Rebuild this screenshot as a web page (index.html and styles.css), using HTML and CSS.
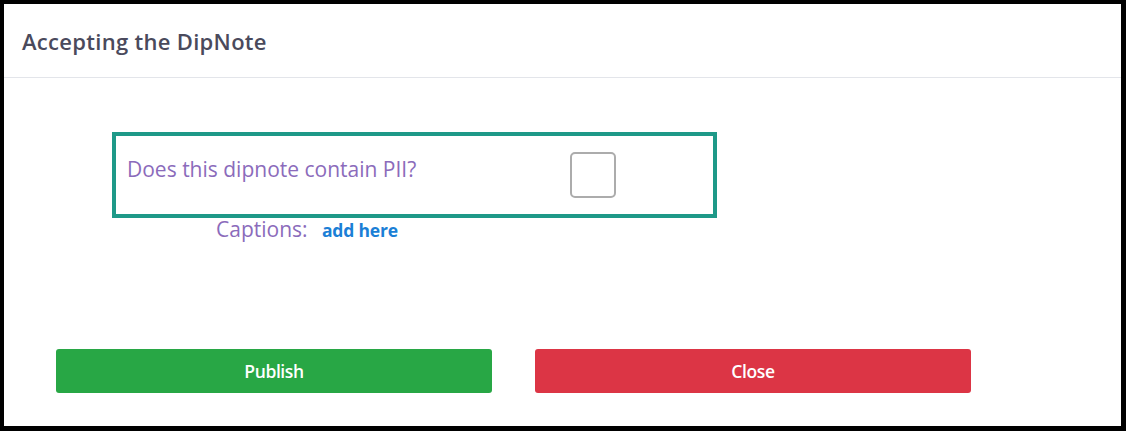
FILE: index.html
```html
<!DOCTYPE html>
<html>
<head>
<meta charset="utf-8">
<link rel="stylesheet" href="styles.css">
</head>
<body>
<div class="frame">
  <div class="modal-header">
    <h2 class="modal-title">Accepting the DipNote</h2>
  </div>
  <div class="modal-body">
    <div class="pii-box">
      <span class="pii-label">Does this dipnote contain PII?</span>
      <span class="checkbox"></span>
    </div>
    <div class="captions-row">
      <span class="captions-label">Captions:</span>
      <a class="add-link">add here</a>
    </div>
    <div class="actions">
      <button class="btn btn-publish">Publish</button>
      <button class="btn btn-close">Close</button>
    </div>
  </div>
</div>
</body>
</html>
```
FILE: styles.css
```css
html, body {
  margin: 0;
  padding: 0;
  background: #fff;
}
.frame {
  box-sizing: border-box;
  width: 1126px;
  height: 431px;
  border: 4px solid #000;
  border-right-width: 5px;
  border-bottom-width: 5px;
  font-family: "Open Sans", "Noto Sans", sans-serif;
  display: flex;
  flex-direction: column;
}
.modal-header {
  box-sizing: border-box;
  height: 74px;
  border-bottom: 1px solid #e3e5ea;
  display: flex;
  align-items: center;
  padding-left: 18px;
}
.modal-title {
  margin: 0;
  font-size: 22px;
  font-weight: 600;
  color: #4a4a5c;
  letter-spacing: 0.3px;
}
.modal-body {
  flex: 1;
  display: flex;
  flex-direction: column;
}
.pii-box {
  box-sizing: border-box;
  margin: 54px 0 0 108px;
  width: 605px;
  height: 86px;
  border: 4px solid #1e9988;
  display: flex;
  align-items: center;
  padding-left: 11px;
}
.pii-label {
  width: 443px;
  font-size: 21px;
  color: #8b6bbb;
  margin-top: -13px;
}
.checkbox {
  box-sizing: border-box;
  width: 46px;
  height: 46px;
  border: 2px solid #acacac;
  border-radius: 5px;
}
.captions-row {
  margin: -3px 0 0 212px;
  display: flex;
  align-items: baseline;
  height: 28px;
}
.captions-label {
  font-size: 21px;
  color: #8b6bbb;
  width: 106px;
}
.add-link {
  font-size: 17.5px;
  font-weight: 700;
  color: #1b7fd6;
  letter-spacing: -0.2px;
}
.actions {
  margin: 106px 0 0 52px;
  display: flex;
  gap: 43px;
}
.btn {
  height: 44px;
  width: 436px;
  border: none;
  border-radius: 3px;
  color: #fff;
  font-family: "Open Sans", "Noto Sans", sans-serif;
  font-size: 17.5px;
  font-weight: 600;
  letter-spacing: -0.4px;
}
.btn-publish {
  background: #28a745;
}
.btn-close {
  background: #dc3545;
}
```
